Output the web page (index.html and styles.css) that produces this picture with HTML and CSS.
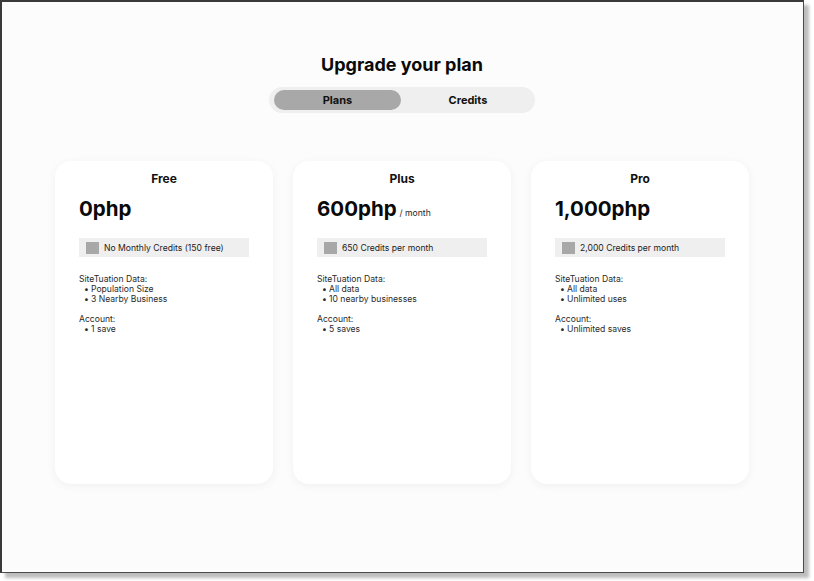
FILE: index.html
```html
<!DOCTYPE html>
<html>
<head>
<meta charset="utf-8">
<link rel="stylesheet" href="styles.css">
</head>
<body>
<div class="frame">
  <h1 class="title">Upgrade your plan</h1>
  <div class="toggle">
    <div class="tab active">Plans</div>
    <div class="tab">Credits</div>
  </div>
  <div class="cards">
    <div class="card">
      <div class="card-name">Free</div>
      <div class="price">0php</div>
      <div class="credits"><span class="swatch"></span>No Monthly Credits (150 free)</div>
      <div class="group">
        <div class="group-title">SiteTuation Data:</div>
        <ul><li>Population Size</li><li>3 Nearby Business</li></ul>
      </div>
      <div class="group">
        <div class="group-title">Account:</div>
        <ul><li>1 save</li></ul>
      </div>
    </div>
    <div class="card">
      <div class="card-name">Plus</div>
      <div class="price">600php<span class="per">/ month</span></div>
      <div class="credits"><span class="swatch"></span>650 Credits per month</div>
      <div class="group">
        <div class="group-title">SiteTuation Data:</div>
        <ul><li>All data</li><li>10 nearby businesses</li></ul>
      </div>
      <div class="group">
        <div class="group-title">Account:</div>
        <ul><li>5 saves</li></ul>
      </div>
    </div>
    <div class="card">
      <div class="card-name">Pro</div>
      <div class="price">1,000php</div>
      <div class="credits"><span class="swatch"></span>2,000 Credits per month</div>
      <div class="group">
        <div class="group-title">SiteTuation Data:</div>
        <ul><li>All data</li><li>Unlimited uses</li></ul>
      </div>
      <div class="group">
        <div class="group-title">Account:</div>
        <ul><li>Unlimited saves</li></ul>
      </div>
    </div>
  </div>
</div>
</body>
</html>
```

FILE: styles.css
```css
* { box-sizing: border-box; }
html, body { margin: 0; padding: 0; background: #ffffff; }
body {
  width: 814px;
  height: 581px;
  overflow: hidden;
  font-family: Inter, "Liberation Sans", sans-serif;
  color: #111;
}
.frame {
  width: 804px;
  height: 573px;
  background: #fcfcfc;
  border-top: 2px solid #3a3a3a;
  border-left: 2px solid #3a3a3a;
  border-right: 1px solid #4a4a4a;
  border-bottom: 1px solid #4a4a4a;
  box-shadow: 5px 5px 3px rgba(0, 0, 0, 0.26);
  padding-top: 52px;
  padding-right: 1px;
  display: flex;
  flex-direction: column;
  align-items: center;
}
.title {
  margin: 0;
  font-size: 18px;
  line-height: 22px;
  font-weight: 700;
  color: #0a0a0a;
}
.toggle {
  margin-top: 11px;
  width: 266px;
  height: 26px;
  border-radius: 13px;
  background: #efefef;
  display: flex;
  align-items: center;
  padding: 0 4px 0 5px;
}
.tab {
  flex: 1;
  height: 20px;
  border-radius: 10px;
  font-size: 11px;
  font-weight: 700;
  line-height: 20px;
  text-align: center;
  color: #111;
}
.tab:not(.active) { padding-left: 4px; }
.tab.active {
  flex: 0 0 127px;
  background: #a8a8a8;
}
.cards {
  margin-top: 48px;
  display: flex;
  gap: 20px;
}
.card {
  width: 218px;
  height: 323px;
  background: #ffffff;
  border-radius: 16px;
  box-shadow: 0 2px 10px rgba(0, 0, 0, 0.05);
  padding: 11px 24px 0 24px;
}
.card-name {
  text-align: center;
  font-size: 12px;
  line-height: 14px;
  font-weight: 700;
}
.price {
  margin-top: 10px;
  height: 26px;
  font-size: 20.5px;
  line-height: 26px;
  font-weight: 700;
  color: #0a0a0a;
}
.per {
  font-size: 8.6px;
  line-height: 1;
  font-weight: 400;
  margin-left: 3px;
  color: #222;
}
.credits {
  margin-top: 16px;
  height: 19px;
  background: #efefef;
  display: flex;
  align-items: center;
  padding-left: 7px;
  font-size: 8.6px;
  color: #222;
}
.swatch {
  width: 13px;
  height: 12px;
  background: #a8a8a8;
  margin-right: 5px;
}
.group {
  margin-top: 17px;
  font-size: 8.6px;
  line-height: 10px;
  color: #2a2a2a;
}
.group + .group { margin-top: 10px; }
.group ul {
  margin: 0;
  padding-left: 5px;
  list-style: none;
}
.group li {
  display: flex;
}
.group li::before {
  content: "\2022";
  width: 7px;
  flex: 0 0 7px;
}
```
